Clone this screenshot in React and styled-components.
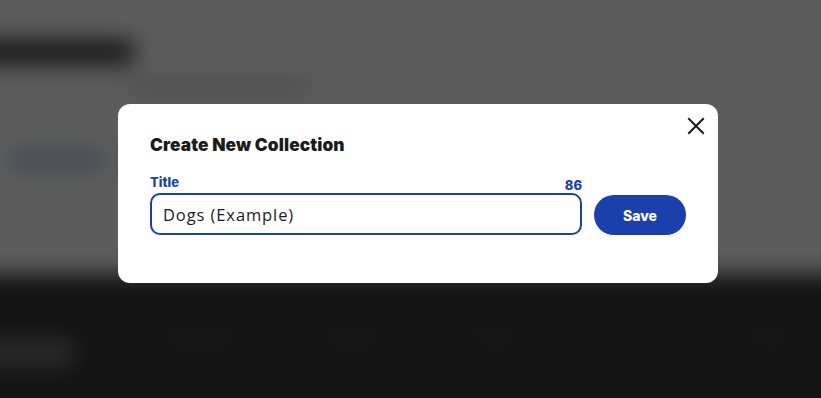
import React from 'react'
import styled, { createGlobalStyle } from 'styled-components'

const GlobalStyle = createGlobalStyle`
  html, body {
    margin: 0;
    padding: 0;
    overflow: hidden;
  }
  body {
    font-family: "Inter", "Liberation Sans", sans-serif;
  }
`;

const BLUE = '#1b3fab';

// the page behind the dialog, blurred; it bleeds past every edge so the blur has no halo
const Backdrop = styled.div`
  position: fixed;
  inset: -60px;
  background: #fff;
  display: flex;
  flex-direction: column;
  filter: blur(11px);
  overflow: hidden;
`;

const Main = styled.main`
  height: 334px;
  padding: 99px 0 0 60px;
  box-sizing: border-box;
  display: flex;
  flex-direction: column;
`;

const HeadingBlock = styled.div`
  margin-left: -60px;
  width: 195px;
  height: 26px;
  background: #4a4a4a;
  border-radius: 10px;
`;

const Subtitle = styled.div`
  margin: 16px 0 0 125px;
  width: 190px;
  height: 12px;
  background: #cacaca;
  border-radius: 6px;
`;

const LinkLine = styled.div`
  margin: 62px 0 0 10px;
  width: 95px;
  height: 10px;
  background: #8b9cdb;
  border-radius: 5px;
`;

const Footer = styled.footer`
  flex: 1;
  background: #363636;
  display: flex;
  align-items: flex-start;
  padding: 50px 0 0 60px;
`;

const FooterLogo = styled.div`
  width: 110px;
  height: 30px;
  margin: 14px 0 0 -35px;
  background: #767676;
  border-radius: 8px;
`;

const FooterCol = styled.div`
  width: ${p => p.$w}px;
  height: 26px;
  margin-left: ${p => p.$ml}px;
  background: #3e3e3e;
  border-radius: 6px;
`;

const Overlay = styled.div`
  position: fixed;
  inset: 0;
  background: rgba(0, 0, 0, 0.64);
  display: flex;
  justify-content: center;
  align-items: flex-start;
  padding: 104px 0 0 15px;
  box-sizing: border-box;
`;

const Modal = styled.div`
  position: relative;
  width: 600px;
  background: #fff;
  border-radius: 12px;
  padding: 31px 32px 48px 32px;
  box-sizing: border-box;
`;

const CloseButton = styled.button`
  position: absolute;
  top: 8px;
  right: 8px;
  width: 28px;
  height: 28px;
  border: none;
  background: transparent;
  padding: 0;
  display: flex;
  align-items: center;
  justify-content: center;
  cursor: pointer;
  color: #1a1a1a;
`;

const ModalTitle = styled.h2`
  margin: 0;
  font-family: "Inter", sans-serif;
  font-weight: 900;
  font-size: 17.3px;
  line-height: 20px;
  letter-spacing: 0.1px;
  color: #1c1c1c;
`;

const Form = styled.div`
  margin-top: 19px;
  display: flex;
  align-items: flex-end;
  gap: 12px;
`;

const Field = styled.div`
  width: 432px;
  display: flex;
  flex-direction: column;
`;

const LabelRow = styled.div`
  display: flex;
  justify-content: space-between;
  align-items: flex-end;
  margin-bottom: 3px;
`;

const Label = styled.label`
  font-family: "Inter", sans-serif;
  font-weight: 800;
  font-size: 13px;
  line-height: 16px;
  color: ${BLUE};
`;

const Counter = styled.span`
  font-family: "Inter", sans-serif;
  font-weight: 800;
  font-size: 13px;
  line-height: 16px;
  color: ${BLUE};
  position: relative;
  top: 3px;
`;

const Input = styled.input`
  height: 42px;
  box-sizing: border-box;
  border: 2px solid ${BLUE};
  border-radius: 10px;
  padding: 0 11px;
  font-family: "Open Sans", sans-serif;
  font-size: 16.5px;
  letter-spacing: 0.9px;
  color: #1c1c1c;
  outline: none;
`;

const SaveButton = styled.button`
  width: 92px;
  height: 40px;
  border: none;
  border-radius: 20px;
  background: ${BLUE};
  color: #fff;
  font-family: "Inter", sans-serif;
  font-weight: 800;
  font-size: 14px;
  cursor: pointer;
`;

const App = () => {
  return (
    <>
      <GlobalStyle />
      <Backdrop aria-hidden="true">
        <Main>
          <HeadingBlock />
          <Subtitle />
          <LinkLine />
        </Main>
        <Footer>
          <FooterLogo />
          <FooterCol $w={75} $ml={85} />
          <FooterCol $w={60} $ml={85} />
          <FooterCol $w={45} $ml={95} />
          <FooterCol $w={40} $ml={230} />
        </Footer>
      </Backdrop>
      <Overlay>
        <Modal>
          <CloseButton aria-label="Close">
            <svg width="18" height="18" viewBox="0 0 18 18" fill="none" stroke="currentColor" strokeWidth="2" strokeLinecap="square">
              <path d="M2 2 L16 16 M16 2 L2 16" />
            </svg>
          </CloseButton>
          <ModalTitle>Create New Collection</ModalTitle>
          <Form>
            <Field>
              <LabelRow>
                <Label>Title</Label>
                <Counter>86</Counter>
              </LabelRow>
              <Input defaultValue="Dogs (Example)" />
            </Field>
            <SaveButton>Save</SaveButton>
          </Form>
        </Modal>
      </Overlay>
    </>
  )
}

export default App
